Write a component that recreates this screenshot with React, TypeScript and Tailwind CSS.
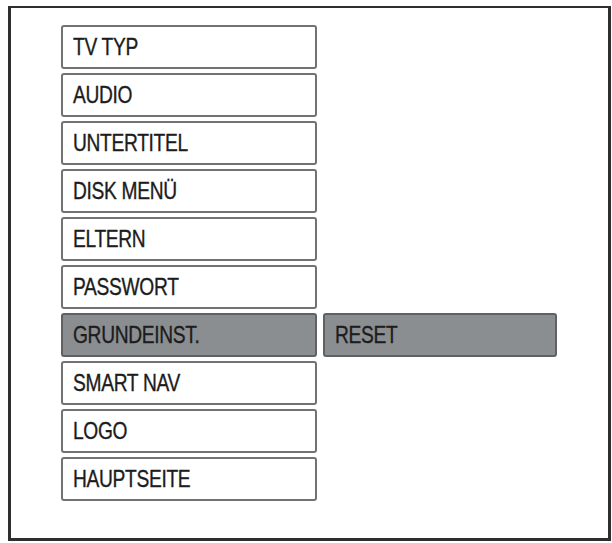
import React from "react";

type Item = {
  label: string;
  active?: boolean;
  sub?: string;
};

const items: Item[] = [
  { label: "TV TYP" },
  { label: "AUDIO" },
  { label: "UNTERTITEL" },
  { label: "DISK MENÜ" },
  { label: "ELTERN" },
  { label: "PASSWORT" },
  { label: "GRUNDEINST.", active: true, sub: "RESET" },
  { label: "SMART NAV" },
  { label: "LOGO" },
  { label: "HAUPTSEITE" },
];

function MenuBox({ label, active, wide }: { label: string; active?: boolean; wide?: boolean }) {
  return (
    <div
      className={
        "h-[44px] flex items-center pl-[10px] border-2 rounded-[3px] overflow-hidden " +
        (wide ? "w-[256px] " : "w-[234px] ") +
        (active ? "bg-[#8b8e91] border-[#5f6164]" : "bg-white border-[#727272]")
      }
    >
      {/* condensed look: no narrow font installed, so squeeze it */}
      <span
        className="inline-block origin-left scale-x-[0.8] whitespace-nowrap text-[24px] leading-none tracking-[-0.4px] text-[#1c1c1c] [-webkit-text-stroke:0.35px_#1c1c1c]"
        style={{ fontFamily: '"Liberation Sans", Arial, sans-serif' }}
      >
        {label}
      </span>
    </div>
  );
}

export default function App() {
  return (
    <div className="w-[612px] h-[543px] bg-white pt-[6px] pl-[8px]">
      <div className="w-[603px] h-[535px] border-[3px] border-t-2 border-[#2e2e2e] pl-[50px] pt-[17px]">
        <div className="flex flex-col gap-[4px]">
          {items.map((item) => (
            <div key={item.label} className="flex gap-[6px]">
              <MenuBox label={item.label} active={item.active} wide />
              {item.sub && <MenuBox label={item.sub} active />}
            </div>
          ))}
        </div>
      </div>
    </div>
  );
}
